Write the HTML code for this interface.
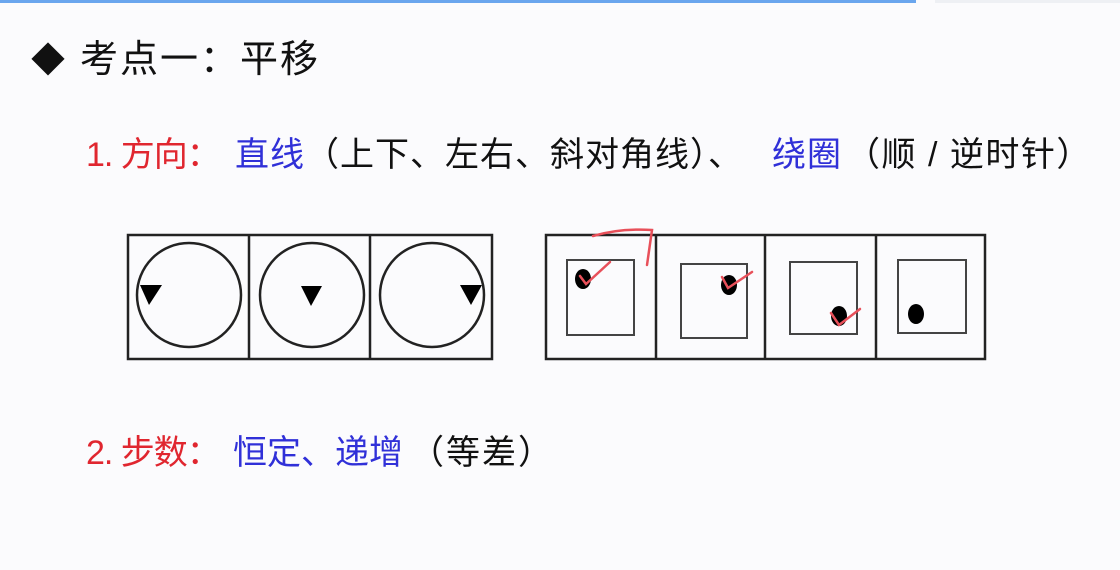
<!DOCTYPE html>
<html><head><meta charset="utf-8"><style>
body{margin:0;width:1120px;height:570px;background:#fbfbfd;position:relative;overflow:hidden;font-family:"Liberation Sans","Noto Sans CJK SC",sans-serif}
.t{position:absolute;white-space:nowrap;line-height:1}
.r{color:#e0262f}.b{color:#3030d8}.k{color:#111}
</style></head><body>
<div style="position:absolute;left:0;top:0;width:916px;height:3px;background:#6aa6ee"></div>
<div style="position:absolute;left:935px;top:0;width:185px;height:3px;background:#eef0f4"></div>
<div class="t k" style="left:31px;top:44px;font-size:34px">◆</div>
<div class="t k" style="left:80px;top:41px;font-size:38px;letter-spacing:2px">考点一：平移</div>

<div class="t r" style="left:86px;top:138px;font-size:34px;letter-spacing:-1px">1. 方向：</div>
<div class="t b" style="left:235px;top:138px;font-size:34px;letter-spacing:1px">直线</div>
<div class="t k" style="left:305px;top:138px;font-size:34px;letter-spacing:1px">（上下、左右、斜对角线）、</div>
<div class="t b" style="left:772px;top:138px;font-size:34px;letter-spacing:1px">绕圈</div>
<div class="t k" style="left:846px;top:138px;font-size:34px;letter-spacing:1.5px">（顺 / 逆时针）</div>

<div class="t r" style="left:86px;top:436px;font-size:34px;letter-spacing:-1px">2. 步数：</div>
<div class="t b" style="left:233px;top:436px;font-size:34px">恒定、递增</div>
<div class="t k" style="left:410px;top:436px;font-size:34px;letter-spacing:2px">（等差）</div>

<svg style="position:absolute;left:0;top:0" width="1120" height="570">
<g fill="none" stroke="#222" stroke-width="2.5">
<rect x="128" y="235" width="364" height="124"/>
<line x1="249" y1="235" x2="249" y2="359"/><line x1="370" y1="235" x2="370" y2="359"/>
<ellipse cx="189" cy="295" rx="52" ry="52"/>
<ellipse cx="312" cy="295" rx="52" ry="52"/>
<ellipse cx="432" cy="295" rx="52" ry="52"/>
<rect x="546" y="235" width="439" height="124"/>
<line x1="656" y1="235" x2="656" y2="359"/><line x1="765" y1="235" x2="765" y2="359"/><line x1="876" y1="235" x2="876" y2="359"/>
</g>
<g fill="none" stroke="#444" stroke-width="2">
<rect x="567" y="260" width="67" height="75"/>
<rect x="681" y="264" width="66" height="74"/>
<rect x="790" y="262" width="67" height="72"/>
<rect x="898" y="260" width="68" height="73"/>
</g>
<g fill="#000">
<polygon points="140,285 162,285 149,305"/>
<polygon points="301,286 322,286 311,306"/>
<polygon points="460,285 482,285 471,305"/>
<ellipse cx="583" cy="279" rx="8" ry="10"/>
<ellipse cx="729" cy="285" rx="8" ry="10"/>
<ellipse cx="839" cy="316" rx="8" ry="10"/>
<ellipse cx="916" cy="314" rx="8" ry="10"/>
</g>
<g fill="none" stroke="#e8505a" stroke-width="2.5" stroke-linecap="round">
<path d="M580 276 L586 284 L610 262"/>
<path d="M593 236 Q620 228 652 230 L647 265"/>
<path d="M722 277 L728 288 L752 272"/>
<path d="M831 313 L839 325 L860 309"/>
</g>
</svg>
</body></html>
